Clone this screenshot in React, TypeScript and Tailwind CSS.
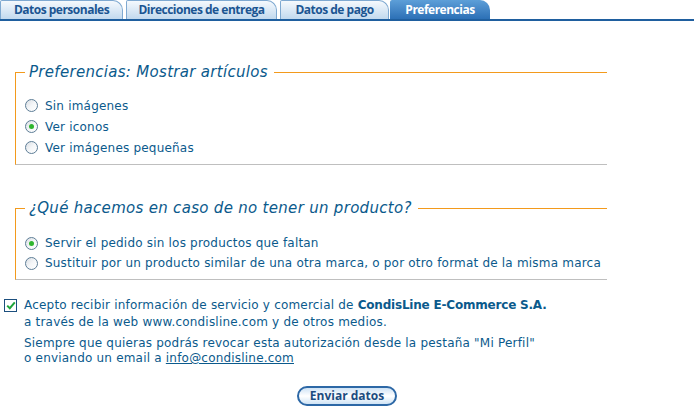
import React from "react";

const txt = "text-[#0b5a8c]";

function Radio({ checked }: { checked?: boolean }) {
  return (
    <span className="relative inline-block w-[13px] h-[13px] rounded-full border border-[#5d7d96] bg-gradient-to-br from-[#d9dee3] via-[#f4f6f8] to-white shrink-0">
      {checked && (
        <span className="absolute left-[3px] top-[3px] w-[5px] h-[5px] rounded-full bg-[#2fb52f]" />
      )}
    </span>
  );
}

function Tab({ label, w, active }: { label: string; w: string; active?: boolean }) {
  return (
    <div
      className={
        active
          ? `${w} h-[19px] flex items-center justify-center rounded-tr-[10px] rounded-tl-[2px] bg-gradient-to-b from-[#5d9fd8] to-[#2c70b6] text-white`
          : `${w} h-[19px] flex items-center justify-center rounded-tr-[10px] rounded-tl-[2px] border-t border-r border-l border-[#7fa9d1] bg-gradient-to-b from-[#f5f9fd] to-[#c2d9ee] text-[#1b5592]`
      }
    >
      <span className="text-[12px] tracking-[-0.5px] font-bold leading-none" style={{ fontFamily: "'Open Sans', sans-serif" }}>
        {label}
      </span>
    </div>
  );
}

export default function App() {
  return (
    <div className="w-[694px] h-[407px] bg-white overflow-hidden" style={{ fontFamily: "'DejaVu Sans', Verdana, sans-serif" }}>
      <div className="flex items-end gap-[3px] border-b-2 border-[#1f5f9f] h-[21px]">
        <Tab label="Datos personales" w="w-[123px]" />
        <Tab label="Direcciones de entrega" w="w-[151px]" />
        <Tab label="Datos de pago" w="w-[109px]" />
        <div className="-ml-[2px]">
          <Tab label="Preferencias" w="w-[100px]" active />
        </div>
      </div>

      <fieldset className="ml-[15px] mt-[42px] w-[592px] border-t border-l border-b border-r-0 border-t-[#f39a1c] border-l-[#f39a1c] border-b-[#bfbfbf] px-0 pt-[14px] pb-[6px] m-0">
        <legend className={`ml-[9px] px-[4px] pr-[6px] text-[15px] tracking-[0.3px] italic leading-[18px] ${txt}`}>
          Preferencias: Mostrar artículos
        </legend>
        <div className={`pl-[9px] text-[12px] tracking-[0.2px] ${txt}`}>
          {[
            ["Sin imágenes", false],
            ["Ver iconos", true],
            ["Ver imágenes pequeñas", false],
          ].map(([l, c]) => (
            <div key={l as string} className="h-[21px] flex items-center gap-[7px]">
              <Radio checked={c as boolean} />
              <span>{l as string}</span>
            </div>
          ))}
        </div>
      </fieldset>

      <fieldset className="ml-[15px] mt-[34px] w-[592px] border-t border-l border-b border-r-0 border-t-[#f39a1c] border-l-[#f39a1c] border-b-[#bfbfbf] px-0 pt-[16px] pb-[6px] m-0">
        <legend className={`ml-[9px] px-[4px] pr-[6px] text-[15px] tracking-[0.3px] italic leading-[18px] ${txt}`}>
          ¿Qué hacemos en caso de no tener un producto?
        </legend>
        <div className={`pl-[9px] text-[12px] tracking-[0.2px] ${txt}`}>
          {[
            ["Servir el pedido sin los productos que faltan", true],
            ["Sustituir por un producto similar de una otra marca, o por otro format de la misma marca", false],
          ].map(([l, c]) => (
            <div key={l as string} className="h-[20px] flex items-center gap-[7px] whitespace-nowrap">
              <Radio checked={c as boolean} />
              <span>{l as string}</span>
            </div>
          ))}
        </div>
      </fieldset>

      <div className={`mt-[17px] flex text-[12px] tracking-[0.2px] ${txt}`}>
        <div className="w-[24px] pl-[4px] pt-[2px] shrink-0">
          <span className="flex items-center justify-center w-[13px] h-[13px] border border-[#1c4f7e] bg-white">
            <svg width="10" height="9" viewBox="0 0 10 9">
              <path d="M1.2 4.6 L3.8 7.2 L8.8 1.4" stroke="#1fa53a" strokeWidth="2" fill="none" />
            </svg>
          </span>
        </div>
        <div className="whitespace-nowrap">
          <p className="leading-[17px]">
            Acepto recibir información de servicio y comercial de <b className="tracking-[-0.2px]">CondisLine E-Commerce S.A.</b>
            <br />a través de la web www.condisline.com y de otros medios.
          </p>
          <p className="leading-[15px] mt-[5px]">
            Siempre que quieras podrás revocar esta autorización desde la pestaña "Mi Perfil"
            <br />o enviando un email a <span className="underline">info@condisline.com</span>
          </p>
        </div>
      </div>

      <div className="mt-[20px] flex justify-center">
        <button className="w-[100px] h-[20px] rounded-full border-2 border-[#2d68a6] bg-gradient-to-b from-[#cfe3f5] via-white to-[#cfe3f5] text-[12px] font-bold text-[#1c4c80] leading-none" style={{ fontFamily: "'Open Sans', sans-serif" }}>
          Enviar datos
        </button>
      </div>
    </div>
  );
}
